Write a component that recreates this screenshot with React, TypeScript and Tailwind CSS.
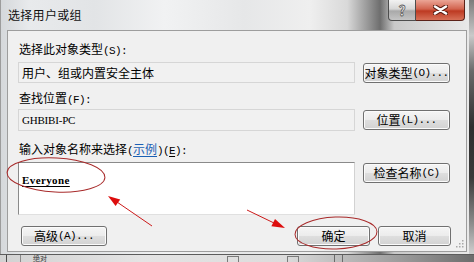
import React from "react";

// half-width latin the way SimSun draws it next to the CJK text
const A = ({ children }: { children: React.ReactNode }) => (
  <span className="font-['Liberation_Mono',monospace] text-[11px] tracking-[-0.6px]">
    {children}
  </span>
);

const Btn = ({
  children,
  className = "",
}: {
  children: React.ReactNode;
  className?: string;
}) => (
  <div
    className={
      "h-[20px] shrink-0 flex items-center justify-center rounded-[3px] border border-[#707070] bg-[linear-gradient(#f5f5f5_0%,#ececec_48%,#dedede_52%,#d2d2d2_100%)] shadow-[inset_0_0_0_1px_#fbfbfb] text-[12px] leading-none text-black " +
      className
    }
  >
    {children}
  </div>
);

const Field = ({ children }: { children: React.ReactNode }) => (
  <div className="w-[337px] h-[21px] shrink-0 flex items-center pl-[3px] border border-[#d6d6d6] bg-[#f1f1f1] text-[12px] leading-none text-black">
    {children}
  </div>
);

export default function App() {
  return (
    <div className="w-[474px] h-[262px] relative overflow-hidden bg-[#d6d6d6] font-['Noto_Sans_CJK_SC','Noto_Sans',sans-serif] select-none">
      <div className="flex h-[254px]">
        {/* window frame */}
        <div className="w-[469px] flex flex-col border-l border-[#9c9c9c] bg-[linear-gradient(90deg,#d5d8db_0%,#e8eaec_6%,#e2e4e6_20%,#f1f2f3_35%,#e6e7e8_52%,#efefef_66%,#d9d9d9_74%,#8e8e8e_79%,#6e6e6e_81%,#c9c9c9_84%,#e9e9e9_100%)]">
          {/* title bar */}
          <div className="h-[30px] shrink-0 flex">
            <div className="flex-1 flex items-center pl-[7px] text-[12px] leading-[14px] tracking-[0.3px] text-[#111]">
              选择用户或组
            </div>
            <div className="flex self-start mr-[4px]">
              <div className="w-[28px] h-[21px] flex items-center justify-center rounded-bl-[4px] border border-t-0 border-[#4d4d4d] bg-[linear-gradient(#f2f2f2_0%,#d6d6d6_45%,#a9a9a9_55%,#c4c4c4_100%)] text-[14px] font-bold leading-none text-[#f8f8f8] [-webkit-text-stroke:0.8px_#5a5a5a]">
                ?
              </div>
              <div className="w-[49px] h-[21px] flex items-center justify-center rounded-br-[4px] border border-l-0 border-t-0 border-[#5b2219] bg-[linear-gradient(#eba596_0%,#d2634e_45%,#bd3a22_55%,#d77057_100%)]">
                <svg width="15" height="10" viewBox="0 0 15 10">
                  <path d="M2 1.5 L13 8.5 M13 1.5 L2 8.5" stroke="#5a1d12" strokeWidth="4.5" strokeLinecap="round" />
                  <path d="M2 1.5 L13 8.5 M13 1.5 L2 8.5" stroke="#ffffff" strokeWidth="2.6" strokeLinecap="round" />
                </svg>
              </div>
            </div>
          </div>

          {/* client area */}
          <div className="h-[222px] ml-[6px] mr-[2px] flex flex-col border border-[#9d9d9d] bg-[#f0f0f0] pl-[10px] pr-[15px] pt-[11px] text-[12px] text-black relative">
            <div className="leading-[14px] pl-[1px]">
              选择此对象类型<A>(S):</A>
            </div>
            <div className="flex items-end gap-[8px] mt-[4px]">
              <Field>用户、组或内置安全主体</Field>
              <Btn className="w-[87px]">
                对象类型<A>(O)...</A>
              </Btn>
            </div>

            <div className="leading-[14px] pl-[1px] mt-[8px]">
              查找位置<A>(F):</A>
            </div>
            <div className="flex items-center gap-[8px] mt-[2px]">
              <div className="w-[337px] h-[22px] flex items-center pl-[3px] border border-[#d6d6d6] bg-[#f1f1f1]">
                <span className="font-['Liberation_Serif',serif] text-[11px] tracking-[-0.2px] leading-none">
                  GHBIBI-PC
                </span>
              </div>
              <Btn className="w-[87px]">
                位置<A>(L)...</A>
              </Btn>
            </div>

            <div className="leading-[14px] pl-[1px] mt-[11px]">
              输入对象名称来选择
              <A>(</A>
              <span className="text-[#1a5fb4] underline underline-offset-2">示例</span>
              <A>)(</A>
              <span className="underline underline-offset-2">
                <A>E</A>
              </span>
              <A>):</A>
            </div>
            <div className="flex items-start gap-[8px] mt-[4px]">
              <div className="w-[337px] h-[53px] border border-t-[#8a8a8a] border-l-[#8a8a8a] border-r-[#d2d2d2] border-b-[#e0e0e0] bg-white pl-[3px] pt-[7px]">
                <span className="font-['Liberation_Serif',serif] text-[11px] tracking-[0.4px] font-bold leading-[12px] underline underline-offset-2">
                  Everyone
                </span>
              </div>
              <Btn className="w-[87px] mt-[1px]">
                检查名称<A>(C)</A>
              </Btn>
            </div>

            <div className="flex items-center mt-[11px]">
              <Btn className="w-[86px] ml-[3px]">
                高级<A>(A)...</A>
              </Btn>
              <div className="flex-1" />
              <Btn className="w-[73px]">确定</Btn>
              <Btn className="w-[73px] ml-[8px]">取消</Btn>
            </div>

            {/* size grip */}
            <svg className="absolute right-[2px] bottom-[3px]" width="9" height="9" viewBox="0 0 9 9">
              {[
                [7, 1],
                [4, 4],
                [7, 4],
                [1, 7],
                [4, 7],
                [7, 7],
              ].map(([x, y]) => (
                <rect key={`${x}-${y}`} x={x} y={y} width="1.5" height="1.5" fill="#a8a8a8" />
              ))}
            </svg>
          </div>
          <div className="flex-1" />
        </div>

        {/* shadow on the right edge */}
        <div className="w-[5px] bg-[linear-gradient(#7c7c7c_0%,#c9c9c9_14%,#6a6a6a_28%,#2f2f2f_50%,#3a3a3a_70%,#8c8c8c_88%,#cfcfcf_100%)]" />
      </div>

      {/* what shows of the window behind */}
      <div className="h-[8px] flex border-t border-[#5c5c5c] bg-[linear-gradient(90deg,#d2d2d2_0%,#e4e4e4_30%,#dcdcdc_60%,#9a9a9a_85%,#6c6c6c_100%)] overflow-hidden">
        <div className="w-[7px] shrink-0 border-r border-[#4a4a4a]" />
        <div className="w-[14px] shrink-0 border-r border-[#8a8a8a]" />
        <span className="ml-[12px] text-[7px] leading-[7px] text-[#333]">绝对</span>
        <div className="w-[180px] shrink-0" />
        <div className="w-[12px] h-[10px] mt-[1px] shrink-0 border border-[#7a7a7a]" />
        <div className="w-[48px] shrink-0" />
        <div className="w-[12px] h-[10px] mt-[1px] shrink-0 border border-[#7a7a7a]" />
        <div className="w-[36px] shrink-0 border-r border-[#6a6a6a]" />
        <div className="w-[8px] shrink-0 border-r border-[#6a6a6a]" />
      </div>

      {/* red annotations */}
      <svg className="absolute inset-0 pointer-events-none" width="474" height="262" viewBox="0 0 474 262">
        <ellipse cx="56" cy="175" rx="49" ry="17" fill="none" stroke="#a82a2a" strokeWidth="1" transform="rotate(3 56 175)" />
        <ellipse cx="336" cy="233" rx="41" ry="16" fill="none" stroke="#a82a2a" strokeWidth="1" transform="rotate(-2 336 233)" />
        <line x1="152" y1="226" x2="117" y2="202" stroke="#cc1a1a" strokeWidth="1" />
        <polygon points="108,196 120.2,199.4 115.6,206" fill="#dd0d0d" />
        <line x1="247" y1="210" x2="274" y2="223" stroke="#cc1a1a" strokeWidth="1" />
        <polygon points="285,228 271.4,226.3 275,219.1" fill="#dd0d0d" />
      </svg>
    </div>
  );
}
